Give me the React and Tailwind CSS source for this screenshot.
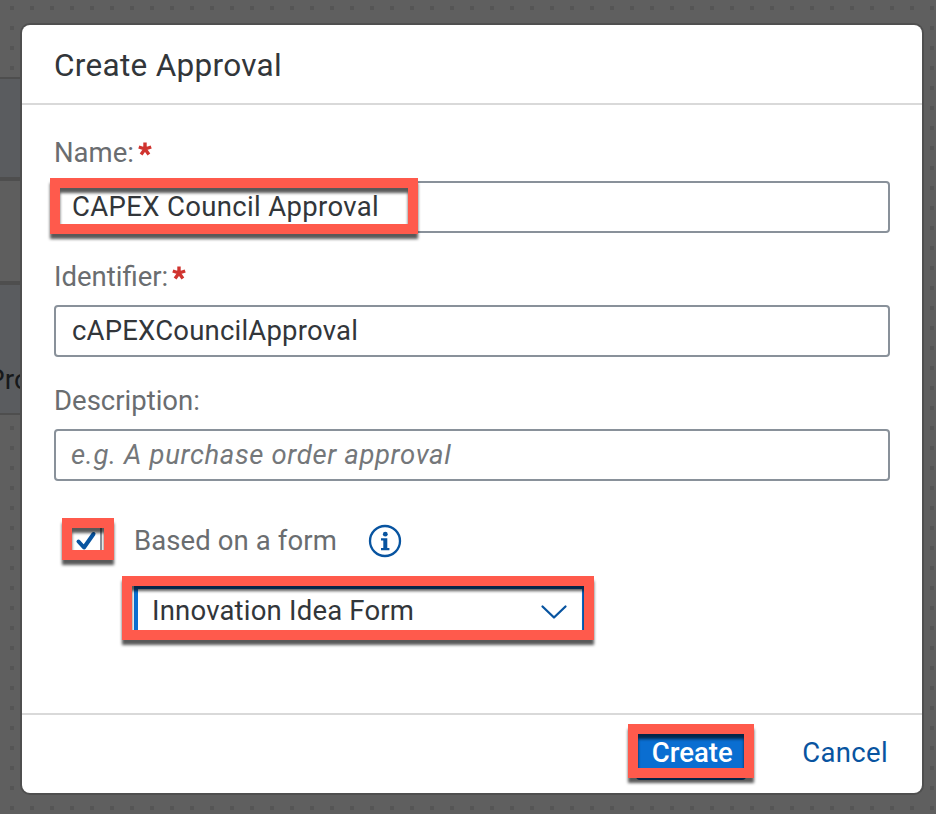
import React from 'react';

function Highlight({ className }) {
  return (
    <div
      aria-hidden="true"
      className={`pointer-events-none absolute z-10 border-10 border-[#ff5a4c] filter-[drop-shadow(0_5px_1.5px_rgba(0,0,0,0.65))] ${className}`}
    />
  );
}

function Label({ children, required }) {
  return (
    <label className="flex h-10 items-center text-[27.5px] leading-10 text-[#6a6d70]">
      <span>{children}</span>
      {required && (
        <svg className="mb-2 ml-1 size-3.5" viewBox="0 0 14 14" stroke="#d0342f" strokeWidth="3.4">
          <path d="M7 7V0.5M7 7L0.8 5M7 7L13.2 5M7 7L3.1 12.4M7 7L10.9 12.4" />
        </svg>
      )}
    </label>
  );
}

function Field({ children }) {
  return (
    <div className="flex h-[52px] items-center rounded-[4px] border-2 border-[#89919a] bg-white pl-4 text-[27.5px] leading-none text-[#32363a]">
      {children}
    </div>
  );
}

function Canvas() {
  return (
    <div className="absolute inset-0 bg-[#5f5f5f]">
      <svg className="absolute inset-0" width="936" height="814">
        <defs>
          <pattern id="dots" x="10" y="6" width="20" height="20" patternUnits="userSpaceOnUse">
            <rect width="4" height="4" fill="#555555" />
          </pattern>
        </defs>
        <rect width="936" height="814" fill="url(#dots)" />
      </svg>
      <div className="absolute top-[77px] left-0 flex h-[338px] w-10 flex-col">
        <div className="h-[104px] shrink-0 border-t-2 border-b-4 border-[#4e4e4e] bg-[#5a5c5f]" />
        <div className="h-[104px] shrink-0 border-b-4 border-[#4e4e4e] bg-[#5e5e5e]" />
        <div className="h-[130px] shrink-0 border-b-2 border-[#4e4e4e] bg-[#5a5c5f] pt-[77px]">
          <span className="-ml-[13px] block text-[28px] leading-9 text-[#17191b]">Pro</span>
        </div>
      </div>
    </div>
  );
}

export default function App() {
  return (
    <div className="relative h-[814px] w-[936px] overflow-hidden pt-[25px] pl-[22px] font-['Roboto','Liberation_Sans',sans-serif]">
      <Canvas />
      <section className="relative flex h-[768px] w-[900px] flex-col rounded-[8px] bg-white shadow-[0_0_0_2px_#4f4f4f]">
        <header className="flex h-20 shrink-0 items-center border-b-2 border-[#d9d9d9] pt-[3px] pl-8">
          <h1 className="text-[31.5px] leading-10 tracking-[0.3px] text-[#32363a]">Create Approval</h1>
        </header>

        <main className="flex flex-1 flex-col px-8 pt-7">
          <Label required>Name:</Label>
          <div className="relative mt-2">
            <Field>
              <span className="tracking-[0.34px]">CAPEX Council Approval</span>
            </Field>
            <Highlight className="-top-[3px] -left-1 h-14 w-[368px]" />
          </div>

          <div className="mt-6">
            <Label required>Identifier:</Label>
          </div>
          <div className="mt-2">
            <Field>
              <span className="tracking-[0.2px]">cAPEXCouncilApproval</span>
            </Field>
          </div>

          <div className="mt-6">
            <Label>Description:</Label>
          </div>
          <div className="mt-2">
            <Field>
              <span className="-ml-px tracking-[0.63px] text-[#74777a] italic">e.g. A purchase order approval</span>
            </Field>
          </div>

          <div className="relative mt-9 flex h-12 items-center">
            <div className="ml-4 flex size-8 items-center justify-center border-2 border-[#89919a]">
              <svg width="22" height="22" viewBox="0 0 22 22" fill="none" stroke="#0854a0" strokeWidth="4" strokeLinecap="round" strokeLinejoin="round">
                <path d="M3.5 11.5L9 17.5L18.5 4" />
              </svg>
            </div>
            <span className="ml-8 w-[204px] text-[27.5px] leading-10 tracking-[0.1px] whitespace-nowrap text-[#6a6d70]">Based on a form</span>
            <svg className="ml-[30px]" width="34" height="34" viewBox="0 0 34 34" fill="none">
              <circle cx="17" cy="17" r="15" stroke="#0854a0" strokeWidth="2.3" />
              <circle cx="17.3" cy="10.2" r="2.4" fill="#0854a0" />
              <path d="M13 14.3H19.3V24H21.4V26.2H13V24H15.3V16.5H13Z" fill="#0854a0" />
            </svg>
            <Highlight className="top-[1px] left-2 h-[42px] w-[52px]" />
          </div>

          <div className="relative mt-[21px] ml-20 h-[52px] w-[450px]">
            <div className="flex h-[46px] items-center border-t-3 border-r-2 border-l-4 border-[#0a6ed1] pl-3.5 text-[27.5px] text-[#32363a]">
              <span className="grow leading-10 tracking-[0.2px]">Innovation Idea Form</span>
              <svg className="mt-0.5 mr-3.5" width="28" height="18" viewBox="0 0 28 18" fill="none" stroke="#0854a0" strokeWidth="2.3" strokeLinecap="round" strokeLinejoin="round">
                <path d="M2.5 3.5L14 14.5L25.5 3.5" />
              </svg>
            </div>
            <Highlight className="-top-2.5 -left-3 h-16 w-[472px]" />
          </div>
        </main>

        <footer className="flex h-20 shrink-0 items-center justify-end border-t-2 border-[#d9d9d9] pr-[34px] text-[27.5px]">
          <div className="relative mr-[56px]">
            <button className="flex h-[52px] w-[110px] items-center justify-center rounded-[4px] bg-[#0a6ed1] pb-0.5 pl-0.5 font-medium text-white">
              Create
            </button>
            <Highlight className="-top-1 -left-2 h-[54px] w-[126px]" />
          </div>
          <button className="pb-0.5 tracking-[0.35px] text-[#0854a0]">Cancel</button>
        </footer>
      </section>
    </div>
  );
}
